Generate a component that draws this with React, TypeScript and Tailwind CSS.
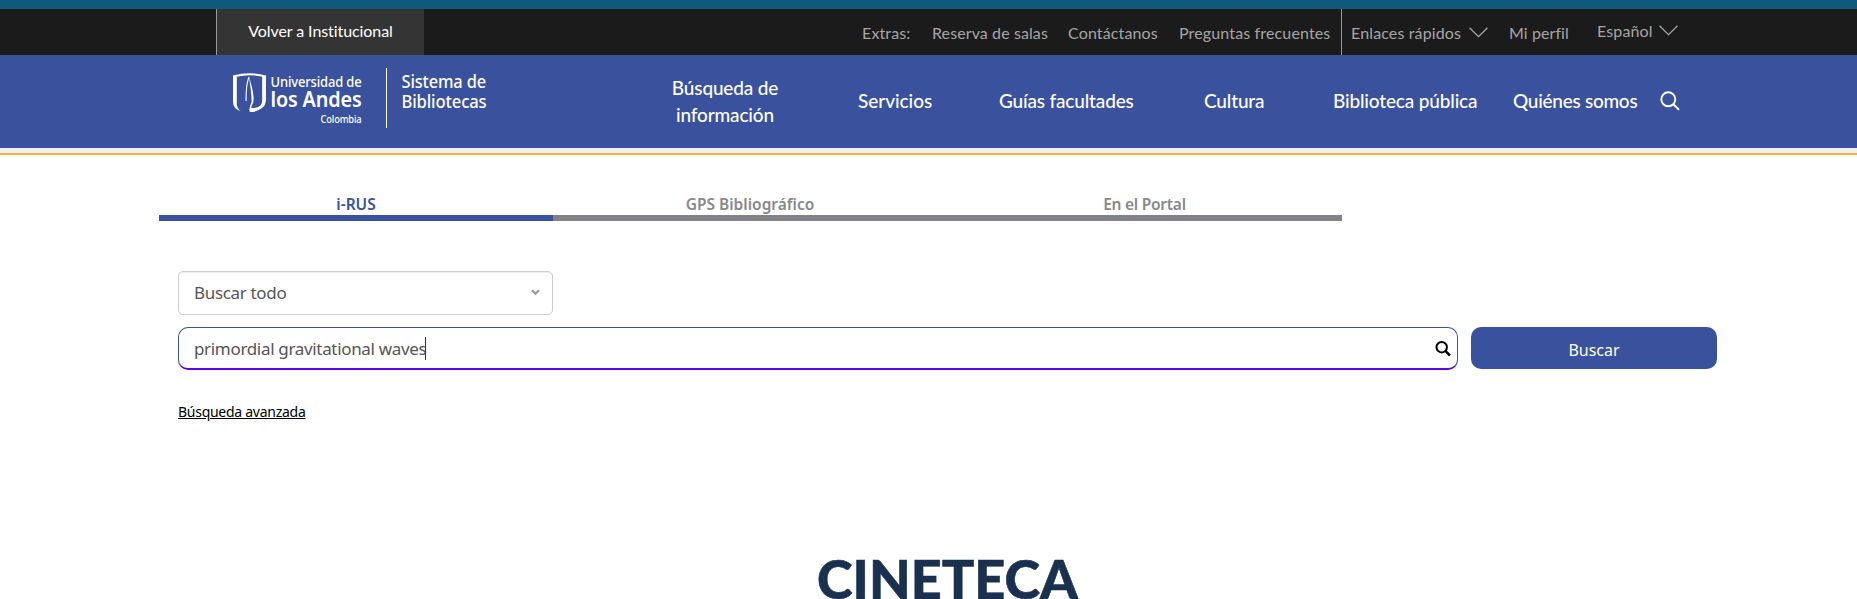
import React from 'react';

const Chevron = () => (
  <svg className="block h-[11px] w-[19px] shrink-0" viewBox="0 0 19 11" fill="none" stroke="#a6a6a6" strokeWidth="1.3">
    <path d="M.5 .8 9.5 9.6 18.5 .8" />
  </svg>
);

const Logo = () => (
  <svg className="block h-[62px] w-[260px]" viewBox="0 0 260 62" fill="#fff" fontFamily="'Noto Sans', 'Open Sans', sans-serif">
    <path d="M0 8.500Q16.500 4 33 8.500V33Q32.800 38 29 41Q24 45 17 45Q16 43 17.500 40.800Q24 41.500 27.500 38.500Q29.200 37 29.200 33V9.800Q16.500 6.600 3.800 9.800V37Q4 41 7.500 44Q0 41.500 0 35Z" />
    <path d="M13 34Q13 17 16 10" fill="none" stroke="#fff" strokeWidth="1.100" />
    <path d="M15.800 8.500C18 17 21 26 20.600 33C20.500 37 17.700 38.500 17.800 44.500L16.500 44C16.500 38 18.700 37 18.600 33C18.500 26 16.800 16 15.800 8.500Z" />
    <g fontWeight="500">
      <text x="37.500" y="19.500" fontSize="14.500" textLength="91" lengthAdjust="spacingAndGlyphs">Universidad de</text>
      <text x="37.500" y="39.500" fontSize="22" fontWeight="600" textLength="91" lengthAdjust="spacingAndGlyphs">los Andes</text>
      <text x="87.500" y="56" fontSize="10.500" textLength="41" lengthAdjust="spacingAndGlyphs">Colombia</text>
      <text x="168.500" y="21.300" fontSize="18.500" textLength="84.500" lengthAdjust="spacingAndGlyphs">Sistema de</text>
      <text x="168.500" y="41.300" fontSize="18.500" textLength="85" lengthAdjust="spacingAndGlyphs">Bibliotecas</text>
    </g>
    <rect x="153" y="1" width="1" height="60" />
  </svg>
);

export default function App() {
  return (
    <div className="h-[599px] w-[1857px] overflow-hidden bg-white font-['Lato',sans-serif]">
      <div className="h-[9px] bg-[#0f5a78]" />
      <div className="flex h-[46px] bg-[#1b1b1b] pl-[216px] text-[16px] tracking-[0.14px] text-[#a6a6a6]">
        <a className="flex w-[208px] items-center justify-center border-l border-[#999] bg-[#343434] pb-[2px] tracking-[-0.08px] text-white">Volver a Institucional</a>
        <div className="ml-[438px] flex w-[480px] whitespace-nowrap border-r border-[#999] pt-[12px]">
          <span className="w-[70px]">Extras:</span>
          <a className="w-[136px] tracking-[0.1px]">Reserva de salas</a>
          <a className="w-[111px]">Contáctanos</a>
          <a>Preguntas frecuentes</a>
        </div>
        <div className="flex whitespace-nowrap pl-[9px] pt-[12px]">
          <a className="w-[118px]">Enlaces rápidos</a>
          <span className="w-[40px] pt-[6px]"><Chevron /></span>
          <a className="w-[88px] tracking-[0.08px]">Mi perfil</a>
          <a className="-mt-[2px] w-[62px]">Español</a>
          <span className="pt-[4px]"><Chevron /></span>
        </div>
      </div>
      <header className="flex h-[93px] bg-[#3a519e] pl-[233px] text-[19px] font-medium leading-[27px] tracking-[-0.16px] text-white">
        <div className="w-[390px] pt-[12px]"><Logo /></div>
        <nav className="flex items-center whitespace-nowrap pb-[2px]">
          <a className="w-[204px] text-center">Búsqueda de<br />información</a>
          <a className="ml-[31px] w-[141px] tracking-[-0.05px]">Servicios</a>
          <a className="w-[205px]">Guías facultades</a>
          <a className="w-[129px]">Cultura</a>
          <a className="w-[180px]">Biblioteca pública</a>
          <a className="w-[147px] tracking-[-0.28px]">Quiénes somos</a>
          <svg className="h-[20px] w-[20px]" viewBox="0 0 20 20" fill="none" stroke="#fff" strokeWidth="1.900">
            <circle cx="8.300" cy="8.300" r="7" /><path d="m13.300 13.300 5.700 5.500" />
          </svg>
        </nav>
      </header>
      <div className="h-[7px] border-b-2 border-[#fbac3b] bg-[#f0f0f0]" />
      <main className="font-['Noto_Sans','Open_Sans',sans-serif]">
        <div className="ml-[159px] mt-[39px] grid w-[1183px] grid-cols-[394px_394px_395px] text-center text-[15.500px] font-semibold leading-[21px]">
          <a className="h-[27px] border-b-[6px] border-[#3a519e] text-[#3a519e]">i-RUS</a>
          <a className="h-[27px] border-b-[6px] border-[#838288] text-[#88888c]">GPS Bibliográfico</a>
          <a className="h-[27px] border-b-[6px] border-[#838288] tracking-[-0.25px] text-[#88888c]">En el Portal</a>
        </div>
        <section className="ml-[178px] mt-[50px] w-[1539px] text-[17px] tracking-[-0.33px] text-[#555]">
          <div className="flex h-[44px] w-[375px] items-center justify-between rounded-[5px] border border-[#ccc] pl-[15px] pr-[12px] shadow-[inset_0_1px_1px_rgba(0,0,0,0.075)]">
            <span>Buscar todo</span>
            <svg className="mb-[2px] h-[7px] w-[9px]" viewBox="0 0 9 7" fill="none" stroke="#999" strokeWidth="2.200"><path d="m1 1.300 3.500 3.500L8 1.300" /></svg>
          </div>
          <div className="mt-[12px] flex gap-[13px]">
            <div className="flex h-[43px] w-[1280px] items-center rounded-[10px] border border-b-2 border-[#3a519e] border-b-[#6200ee] pl-[15px] pr-[6px]">
              <span className="-mr-[1px] whitespace-nowrap pt-[1px]">primordial gravitational waves</span>
              <span className="h-[23px] w-[1px] bg-[#333]" />
              <svg className="ml-auto mt-[1px] h-[16px] w-[16px]" viewBox="0 0 16 16" fill="none" stroke="#000" strokeWidth="2"><circle cx="6.700" cy="6.200" r="5.200" /><path d="m10.300 9.900 4.700 4.600" strokeWidth="2.500" /></svg>
            </div>
            <button className="h-[42px] w-[246px] rounded-[10px] bg-[#3a519e] pt-[3px] text-[16px] tracking-normal text-white">Buscar</button>
          </div>
          <a className="mt-[32px] block text-[14px] leading-[20px] tracking-[-0.27px] text-black underline">Búsqueda avanzada</a>
        </section>
        <h2 className="mt-[121px] pl-[38px] text-center font-['Lato_Black','Lato',sans-serif] text-[54px] font-black leading-[72px] text-[#19304f] [-webkit-text-stroke:0.6px_#19304f]">CINETECA</h2>
      </main>
    </div>
  );
}
